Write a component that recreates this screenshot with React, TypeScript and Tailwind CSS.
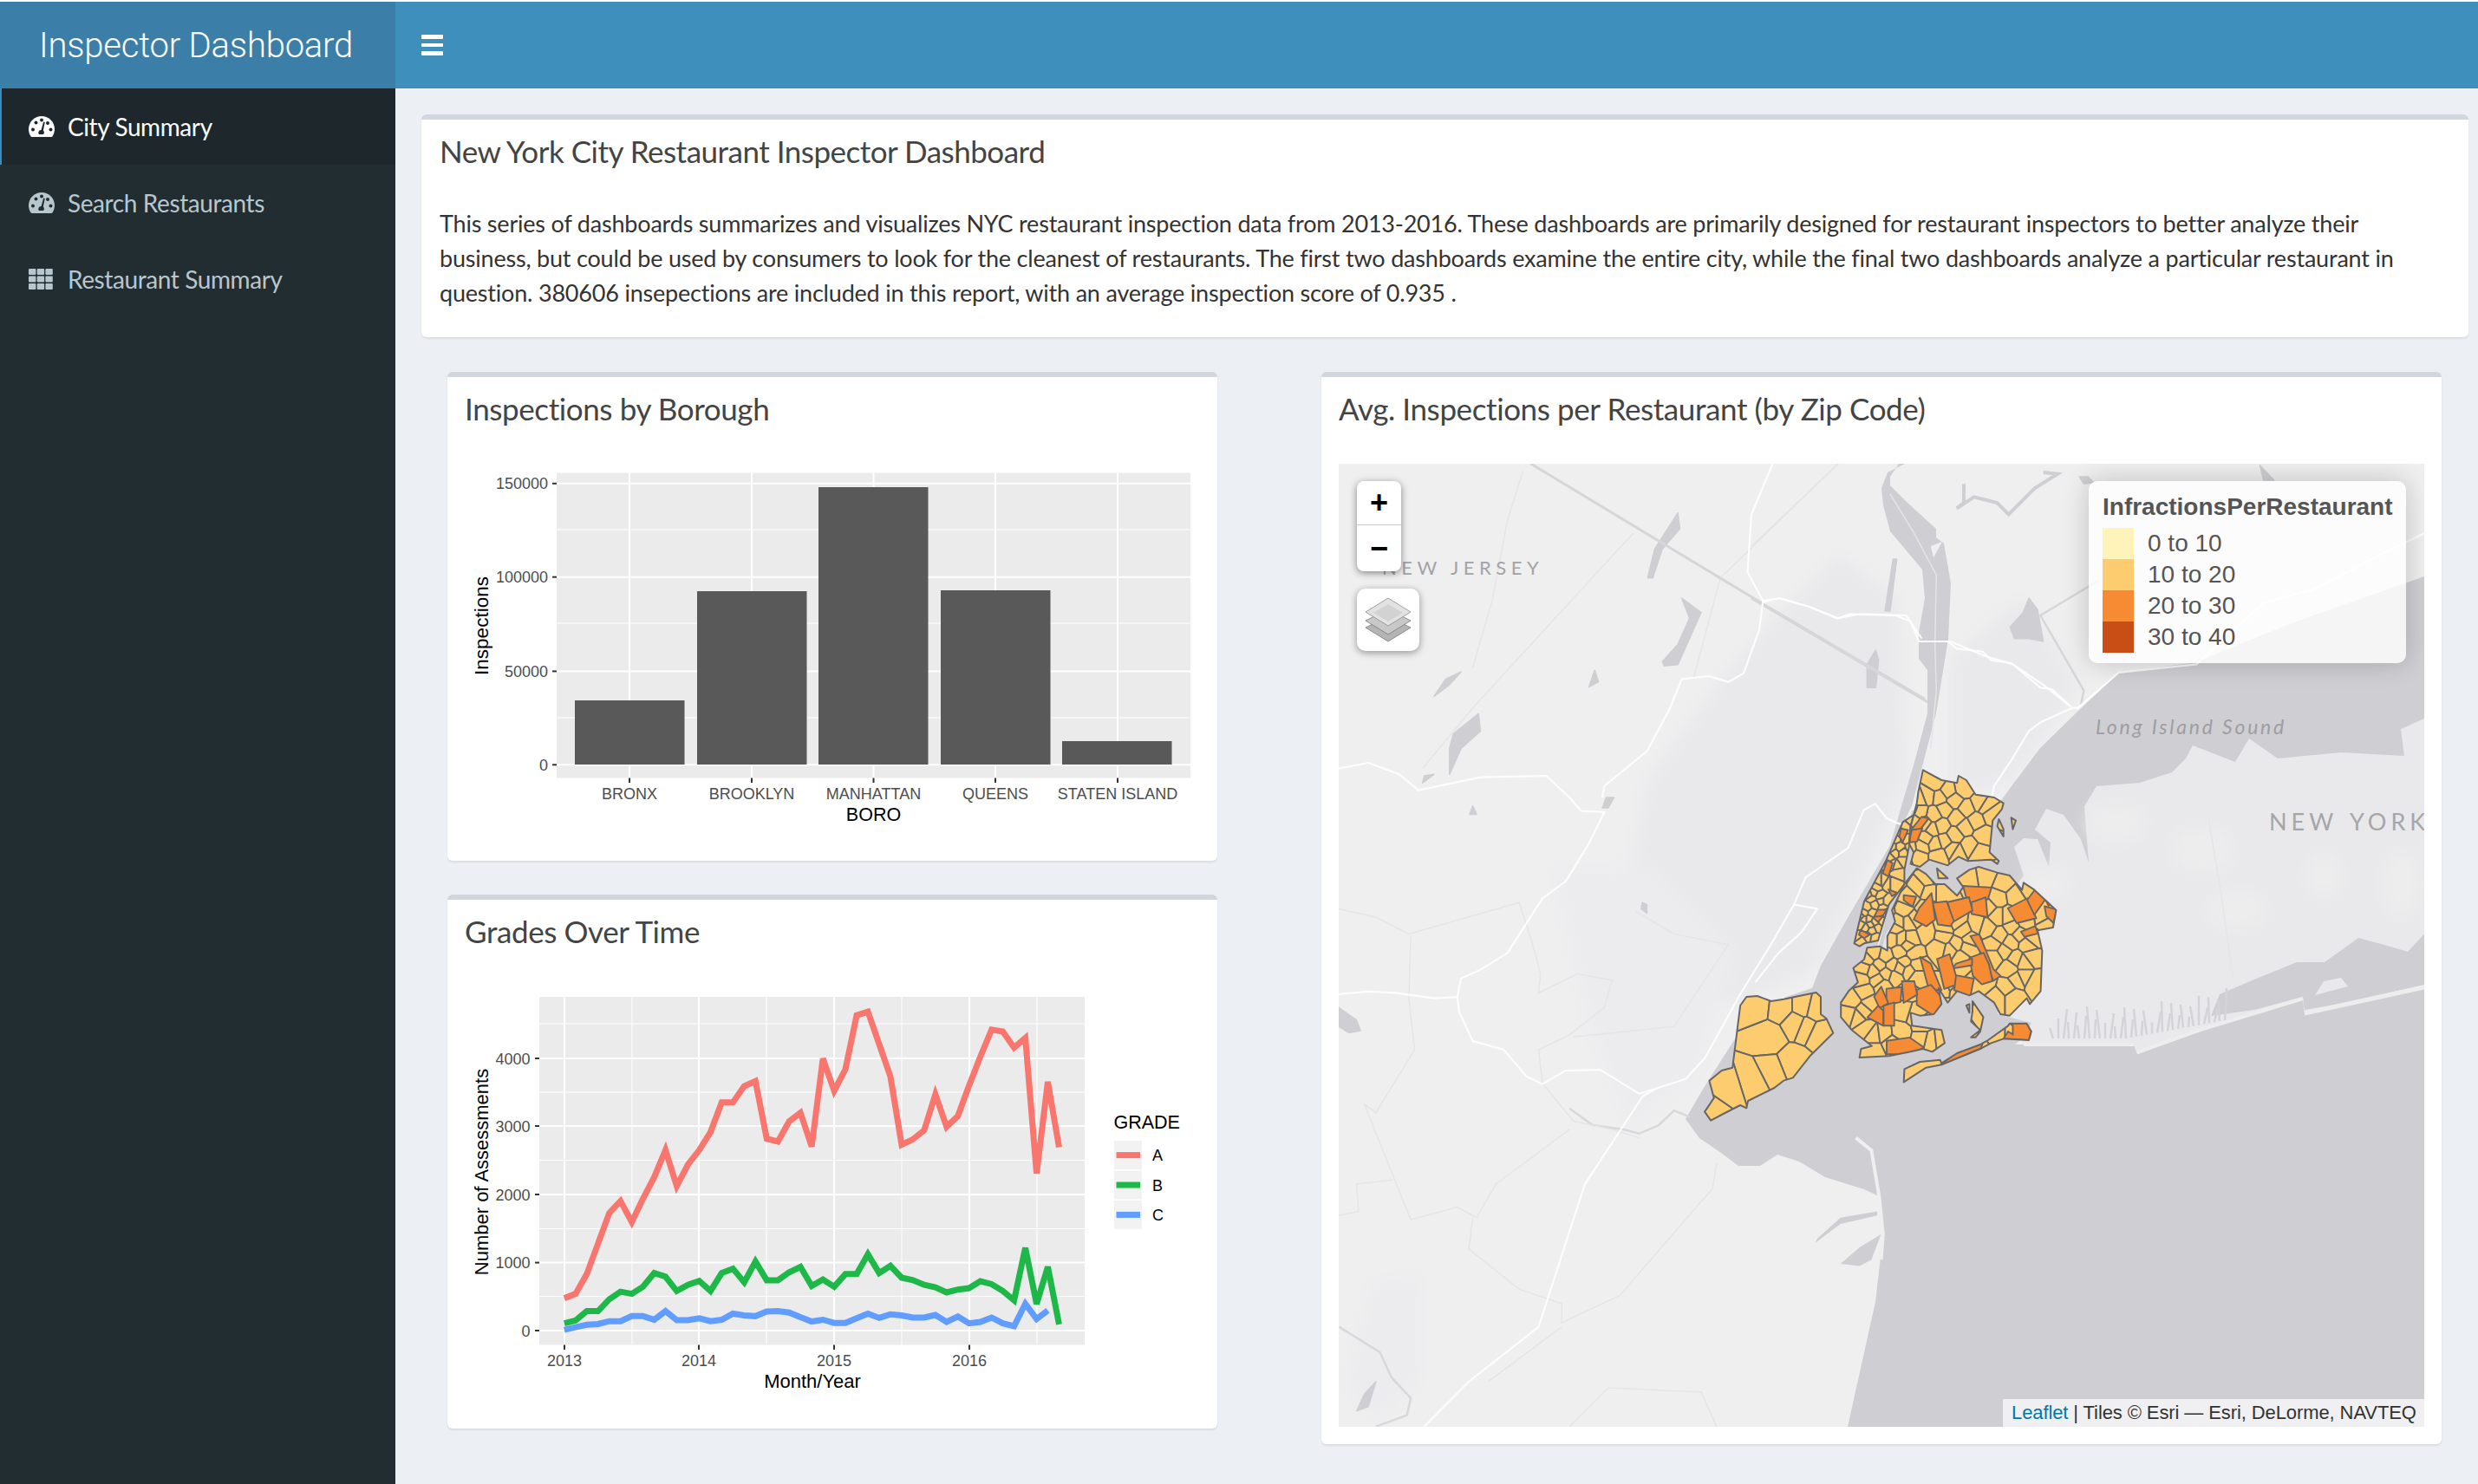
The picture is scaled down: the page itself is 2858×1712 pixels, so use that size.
import React from "react";

type P = number[][];
const pts = (p: P) => p.map((q) => q.join(",")).join(" ");
const z3 = (x: number, y: number) => [500 + x / 1.704, 1020 + y / 2.412];
const z4 = (p: P): P => p.map(([x, y]) => [1900 + x / 2.8, 850 + y / 3]);
const z5 = (p: P): P => p.map(([x, y]) => [1520 + x / 2.24, 420 + y / 3]);
const z7 = (p: P): P => p.map(([x, y]) => [1520 + x / 2.24, 920 + y / 2.063]);
const z10 = (p: P): P => p.map(([x, y]) => [2020 + x / 3, 530 + y / 3]);
const z6 = (p: P): P => p.map(([x, y]) => [2220 + x / 2.458, 420 + y / 2.613]);
const z9 = (p: P): P => p.map(([x, y]) => [2300 + x / 2.976, 900 + y / 3]);

const gradeA = [1152,1140,1085,1000,915,882,940,875,815,740,840,780,740,690,607,607,562,548,708,716,660,636,730,485,575,515,365,355,445,535,725,710,685,585,675,645,560,480,405,410,455,428,805,550,732];
const gradeB = [1222,1214,1188,1188,1155,1134,1140,1120,1082,1092,1132,1115,1104,1132,1082,1070,1108,1050,1102,1102,1080,1065,1118,1100,1120,1085,1085,1030,1082,1062,1095,1102,1115,1122,1136,1128,1124,1105,1113,1132,1158,1012,1168,1065,1225];
const gradeC = [1240,1233,1226,1224,1216,1216,1202,1202,1212,1188,1213,1213,1208,1216,1212,1195,1200,1202,1189,1188,1192,1205,1217,1212,1221,1221,1208,1195,1207,1197,1200,1206,1206,1199,1218,1203,1222,1218,1206,1222,1230,1168,1210,1186];
const series = (v: number[]) => pts(v.map((y, i) => z3(257 + 22.1 * i, y)));

const YEL = "#fdcc6f";
const ORG = "#f68b33";
const DRK = "#c94e16";
const EDGE = "#666666";

const outlines: P[] = [
  [[300,930],[320,900],[355,897],[400,915],[440,908],[500,895],[545,885],[560,900],[560,960],[578,975],[600,1025],[525,1105],[470,1180],[440,1190],[410,1215],[325,1260],[320,1285],[300,1275],[245,1305],[205,1328],[185,1298],[215,1250],[200,1190],[240,1155],[275,1145]],
  [[890,115],[950,150],[1000,160],[1005,135],[1030,150],[1060,200],[1120,210],[1150,230],[1145,250],[1115,290],[1105,400],[1135,430],[1130,440],[1110,425],[1035,430],[1005,415],[970,445],[910,425],[880,450],[850,440],[860,400],[845,370],[850,310],[870,230],[875,190]],
  [[825,295],[860,270],[850,310],[845,380],[830,460],[830,510],[780,580],[760,650],[745,705],[700,715],[685,725],[668,715],[680,660],[700,570],[770,430]],
  [[790,600],[830,510],[870,455],[900,475],[930,510],[960,510],[1000,550],[1020,520],[1000,490],[1040,460],[1070,450],[1130,470],[1170,480],[1210,530],[1215,505],[1250,530],[1320,600],[1310,660],[1260,670],[1275,740],[1270,880],[1235,925],[1225,905],[1170,965],[1140,960],[1120,920],[1070,880],[1040,895],[1000,880],[970,920],[940,870],[950,925],[925,960],[880,965],[850,955],[855,1000],[950,1015],[960,1060],[920,1090],[890,1080],[850,1090],[780,1105],[685,1110],[690,1080],[725,1070],[660,1015],[625,970],[625,920],[650,880],[680,850],[665,800],[700,770],[710,730],[750,725],[775,740],[775,690],[800,640]],
  [[828,1195],[830,1150],[880,1125],[945,1118],[950,1130],[1000,1095],[1075,1065],[1100,1050],[1165,1000],[1170,992],[1225,992],[1240,1020],[1232,1050],[1150,1045],[1110,1060],[1075,1080],[950,1135],[900,1145]],
  [[1050,915],[1085,970],[1075,1020],[1060,1040],[1045,1040],[1075,1015],[1045,985],[1050,950]],
  [[1030,930],[1040,925],[1040,955]],
  [[935,455],[970,490],[940,490]],
  [[1175,280],[1190,290],[1180,320]],
  [[1135,285],[1150,320],[1150,345],[1130,310]],
];

const seeds: P = [
  [390,1040],[350,930],[435,940],[500,940],[515,1000],[555,1020],[470,1130],[400,1160],[345,1190],[255,1220],[210,1290],[480,985],[540,950],
  [930,160],[1020,180],[1090,240],[1030,250],[970,190],[960,250],[1025,310],[1085,340],[990,340],[925,270],[905,205],[855,250],[860,290],[900,350],[985,390],[940,410],[875,410],[850,385],[1070,400],[1110,270],[920,320],[950,310],
  [880,215],[945,210],[990,220],[1000,280],[1060,290],[930,370],[885,380],[960,360],[1040,380],[880,260],[1000,400],[1075,230],[895,300],
  [800,400],[815,385],[790,385],[810,470],[825,430],[760,500],[740,520],[725,560],[710,590],[750,550],[775,510],[795,510],[770,570],[700,630],[725,610],[720,650],[745,660],[735,695],[705,660],[690,650],[690,705],[760,590],[800,350],[835,350],
  [750,500],[730,540],[715,545],[700,610],[735,580],[755,570],[690,620],[715,630],[735,640],[760,640],[770,610],[710,690],[725,670],[680,690],[790,440],[805,445],[780,420],[825,400],[835,320],[810,330],
  [1095,480],[1150,505],[1035,490],[1225,525],[1130,560],[1190,550],[1130,620],[1065,650],[1020,670],[1200,680],[955,690],[830,600],[810,640],[880,520],[960,530],[930,480],[900,500],[1245,700],[1140,690],[1180,660],[1240,760],[1190,770],[1150,740],[1215,830],[1250,850],[1195,840],[1130,900],[1180,900],[1000,720],[1030,730],[900,680],[860,630],[820,700],[800,660],[850,700],[940,730],[980,740],[1280,630],
  [845,640],[845,560],[905,530],[895,600],[1095,660],[1100,590],[1165,620],[1220,640],[1285,640],[1000,640],[1040,700],[960,660],[1120,720],[1170,710],[1230,720],[1170,800],[1215,780],[1160,870],[1090,850],
  [840,720],[815,745],[790,700],[730,750],[700,800],[750,790],[790,790],[830,780],[860,750],[870,790],[745,840],[800,830],[870,830],[700,880],[660,910],[720,925],[680,970],[730,1030],[765,1025],[815,1020],[890,1000],[910,1045],[730,1090],[1010,760],[1120,760],[880,1130],
  [770,760],[710,770],[730,810],[770,820],[815,800],[845,810],[690,840],[760,860],[840,880],[700,950],[650,960],[860,960],[950,1040],[890,1040],[790,1060],[705,1010],
  [830,950],
];

const oranges: P[] = [
  [[885,280],[905,285],[880,320],[855,320]],[[855,325],[885,320],[870,360],[848,362]],[[820,320],[840,325],[825,360],[815,345]],
  [[775,430],[790,440],[778,480],[762,470]],[[1025,520],[1105,525],[1095,560],[1050,575],[1035,560]],[[1050,575],[1090,560],[1095,620],[1050,610]],
  [[975,575],[1035,560],[1045,600],[990,635]],[[925,580],[965,575],[985,635],[975,650],[940,645],[930,600]],[[915,550],[925,630],[900,650],[865,630],[880,595]],
  [[830,550],[865,555],[855,585],[830,565]],[[1170,595],[1225,565],[1250,625],[1195,640]],[[1230,565],[1255,530],[1280,565],[1250,610]],[[1285,590],[1320,600],[1310,640],[1290,620]],
  [[1210,675],[1250,658],[1258,680],[1220,690]],[[1050,700],[1075,695],[1115,800],[1135,820],[1115,835],[1090,770]],[[1045,770],[1085,755],[1100,790],[1110,840],[1080,850],[1055,825]],
  [[1000,785],[1045,770],[1045,790],[990,800]],[[940,775],[975,760],[1000,850],[960,865]],[[885,770],[915,790],[945,870],[910,870]],[[1000,830],[1050,840],[1040,895],[995,875]],
  [[875,880],[915,865],[955,915],[925,960],[875,925]],[[825,850],[860,850],[868,890],[830,915]],[[775,875],[818,870],[815,915],[775,925]],[[755,870],[775,920],[750,935],[735,900]],
  [[745,935],[760,950],[760,995],[715,970]],[[765,935],[795,925],[795,995],[765,995]],[[780,1055],[845,1045],[885,1075],[850,1095],[780,1095]],[[950,1135],[1000,1095],[1075,1065],[1070,1080]],
  [[745,600],[770,600],[755,625],[735,620]],[[690,670],[715,685],[700,695],[685,685]],
  [[780,530],[805,540],[790,550]],[[730,625],[760,620],[745,640]],
];
const rockawayEast: P = [[1170,992],[1225,992],[1240,1020],[1232,1050],[1150,1045],[1165,1020],[1180,1030],[1180,1000]];

function grow(p: P, k: number): P {
  const cx = p.reduce((s, q) => s + q[0], 0) / p.length;
  const cy = p.reduce((s, q) => s + q[1], 0) / p.length;
  return p.map(([x, y]) => [cx + (x - cx) * k, cy + (y - cy) * k]);
}

function clipHalf(poly: P, a: number[], b: number[]): P {
  const mx = (a[0] + b[0]) / 2, my = (a[1] + b[1]) / 2, nx = b[0] - a[0], ny = b[1] - a[1];
  const d = (p: number[]) => (p[0] - mx) * nx + (p[1] - my) * ny;
  const out: P = [];
  poly.forEach((p, i) => {
    const q = poly[(i + 1) % poly.length];
    const dp = d(p), dq = d(q);
    if (dp <= 0) out.push(p);
    if (dp < 0 !== dq < 0) {
      const t = dp / (dp - dq);
      out.push([p[0] + (q[0] - p[0]) * t, p[1] + (q[1] - p[1]) * t]);
    }
  });
  return out;
}
const fullSeeds = z4(seeds);
const cells = fullSeeds.map((s, i) => {
  let poly: P = [[1900, 850], [2400, 850], [2400, 1320], [1900, 1320]];
  fullSeeds.forEach((o, j) => { if (j !== i && poly.length) poly = clipHalf(poly, s, o); });
  return poly;
});

const Sans = "font-['Lato','Noto_Sans',sans-serif]";

function Gauge({ bg, fg }: { bg: string; fg: string }) {
  return (
    <svg width="30" height="24" viewBox="0 0 30 24" className="block shrink-0">
      <path d="M15 0C6.7 0 0 6.7 0 15c0 3.2 1 6.2 2.7 8.6.3.3.6.4 1 .4h22.6c.4 0 .7-.1 1-.4C29 21.200 30 18.200 30 15 30 6.700 23.300 0 15 0z" fill={fg} />
      <circle cx="5" cy="15.500" r="2" fill={bg} />
      <circle cx="8.500" cy="7.500" r="2" fill={bg} />
      <circle cx="15" cy="4.500" r="2" fill={bg} />
      <circle cx="22" cy="8" r="2" fill={bg} />
      <circle cx="25.500" cy="15.500" r="2" fill={bg} />
      <path d="M17.200 6.500L18.800 7 16.800 16.500A3 3 0 0 1 17 21H12A3 3 0 0 1 14.500 16z" fill={bg} />
    </svg>
  );
}

function GridIcon({ fg }: { fg: string }) {
  const cols = [0, 9.700, 19.400];
  return (
    <svg width="28" height="24" viewBox="0 0 28 24" className="block shrink-0">
      {cols.map((x) => [0, 8.500, 17].map((y) => <rect key={`${x}-${y}`} x={x} y={y} width="8.400" height="7" rx="1" fill={fg} />))}
    </svg>
  );
}

function NavItem({ icon, label, active }: { icon: React.ReactNode; label: string; active?: boolean }) {
  return (
    <div className={active ? "flex h-[88px] items-center gap-[15px] border-l-[2px] border-[#3c8dbc] bg-[#1e282c] pl-[31px] text-white" : "flex h-[88px] items-center gap-[15px] pl-[33px] text-[#b8c7ce]"}>
      <div className="flex w-[30px] justify-start">{icon}</div>
      <span className={`${Sans} text-[28px] leading-none tracking-[-0.4px]`}>{label}</span>
    </div>
  );
}

function Card({ title, children, className }: { title: string; children: React.ReactNode; className?: string }) {
  return (
    <div className={`rounded-[6px] border-t-[6px] border-[#d2d6de] bg-white shadow-[0_2px_2px_rgba(0,0,0,0.08)] ${className ?? ""}`}>
      <h3 className={`${Sans} px-[20px] pt-[16px] text-[35px] leading-[40px] tracking-[-0.4px] text-[#444]`}>{title}</h3>
      {children}
    </div>
  );
}

const tickCls = "font-['Liberation_Sans',Arial,sans-serif]";

function BarChart() {
  const bars = [[663, 808], [804, 682], [944, 562], [1085, 681], [1225, 855]];
  const names = ["BRONX", "BROOKLYN", "MANHATTAN", "QUEENS", "STATEN ISLAND"];
  const xs = [726, 867, 1007.5, 1148, 1289];
  const ys: [number, string][] = [[557.8, "150000"], [665.7, "100000"], [774.4, "50000"], [882.3, "0"]];
  return (
    <svg viewBox="516 519 888 474" width="888" height="474" className={`mt-[28px] block ${tickCls}`}>
      <rect x="642" y="545.500" width="731" height="352" fill="#ebebeb" />
      {[611, 719, 828].map((y) => <line key={y} x1="642" x2="1373" y1={y} y2={y} stroke="#fff" strokeWidth="1" />)}
      {ys.map(([y]) => <line key={y} x1="642" x2="1373" y1={y} y2={y} stroke="#fff" strokeWidth="2" />)}
      {xs.map((x) => <line key={x} x1={x} x2={x} y1="545.500" y2="897.500" stroke="#fff" strokeWidth="2" />)}
      {bars.map(([x, y]) => <rect key={x} x={x} y={y} width="126.500" height={882 - y} fill="#595959" />)}
      {ys.map(([y, t]) => (
        <g key={t}>
          <line x1="637" x2="642" y1={y} y2={y} stroke="#333" strokeWidth="2" />
          <text x="632" y={y + 6.500} textAnchor="end" fontSize="18" fill="#4d4d4d">{t}</text>
        </g>
      ))}
      {xs.map((x, i) => (
        <g key={x}>
          <line x1={x} x2={x} y1="897.500" y2="903" stroke="#333" strokeWidth="2" />
          <text x={x} y="921.500" textAnchor="middle" fontSize="18" fill="#4d4d4d">{names[i]}</text>
        </g>
      ))}
      <text x="1007.500" y="946.500" textAnchor="middle" fontSize="21.500" fill="#000">BORO</text>
      <text transform="translate(563 722) rotate(-90)" textAnchor="middle" fontSize="22.500" fill="#000">Inspections</text>
    </svg>
  );
}

function LineChart() {
  const ys: [number, string][] = [[1535, "0"], [1456.6, "1000"], [1378, "2000"], [1299, "3000"], [1221, "4000"]];
  const xs: [number, string][] = [[651, "2013"], [806, "2014"], [962, "2015"], [1118, "2016"]];
  const keys: [number, string, string][] = [[1332.6, "#f8766d", "A"], [1367, "#1db847", "B"], [1401.4, "#619cff", "C"]];
  return (
    <svg viewBox="516 1122 888 526" width="888" height="526" className={`mt-[28px] block ${tickCls}`}>
      <rect x="622" y="1150" width="629" height="401.500" fill="#ebebeb" />
      {[1495.6, 1417.5, 1338.5, 1260, 1181].map((y) => <line key={y} x1="622" x2="1251" y1={y} y2={y} stroke="#fff" strokeWidth="1" />)}
      {[729, 884, 1040, 1196].map((x) => <line key={x} x1={x} x2={x} y1="1150" y2="1551.500" stroke="#fff" strokeWidth="1" />)}
      {ys.map(([y]) => <line key={y} x1="622" x2="1251" y1={y} y2={y} stroke="#fff" strokeWidth="2" />)}
      {xs.map(([x]) => <line key={x} x1={x} x2={x} y1="1150" y2="1551.500" stroke="#fff" strokeWidth="2" />)}
      <polyline points={series(gradeA)} fill="none" stroke="#f8766d" strokeWidth="7" strokeLinejoin="miter" />
      <polyline points={series(gradeB)} fill="none" stroke="#1db847" strokeWidth="7" />
      <polyline points={series(gradeC)} fill="none" stroke="#619cff" strokeWidth="7" />
      {ys.map(([y, t]) => (
        <g key={t}>
          <line x1="617" x2="622" y1={y} y2={y} stroke="#333" strokeWidth="2" />
          <text x="611.500" y={y + 6.500} textAnchor="end" fontSize="18" fill="#4d4d4d">{t}</text>
        </g>
      ))}
      {xs.map(([x, t]) => (
        <g key={t}>
          <line x1={x} x2={x} y1="1551.500" y2="1557" stroke="#333" strokeWidth="2" />
          <text x={x} y="1575.500" textAnchor="middle" fontSize="18" fill="#4d4d4d">{t}</text>
        </g>
      ))}
      <text x="937" y="1601" textAnchor="middle" fontSize="22" fill="#000">Month/Year</text>
      <text transform="translate(563 1352) rotate(-90)" textAnchor="middle" fontSize="22" fill="#000">Number of Assessments</text>
      <text x="1284.500" y="1301.500" fontSize="21.500" fill="#000">GRADE</text>
      {keys.map(([y, c, t]) => (
        <g key={t}>
          <rect x="1285" y={y - 16.500} width="32" height="33" fill="#f2f2f2" />
          <line x1="1287.500" x2="1315" y1={y} y2={y} stroke={c} strokeWidth="7" />
          <text x="1329" y={y + 6.500} fontSize="18" fill="#000">{t}</text>
        </g>
      ))}
    </svg>
  );
}

const WATER = "#cfcfd3";
const lakes: P[] = [
  ...[
    [[930,515],[935,570],[890,640],[865,740],[852,740],[870,640]],
    [[940,810],[990,860],[960,950],[930,1040],[895,1045],[890,1030],[930,970],[960,880]],
    [[370,1065],[340,1110],[300,1150],[330,1090]],
    [[415,1210],[420,1270],[370,1330],[340,1420],[340,1330],[350,1280]],
    [[715,1060],[725,1100],[700,1118]],
    [[300,1420],[270,1450],[275,1425]],
  ].map(z5),
  ...[
    [[54,500],[100,530],[110,555],[80,560],[54,545]],
    [[838,250],[850,255],[850,275],[835,265]],
    [[400,20],[410,40],[392,40]],
    [[745,0],[765,0],[750,25],[735,25]],
    [[150,1390],[130,1450],[100,1460],[120,1420]],
  ].map(z7),
  ...[
    [[960,480],[990,520],[1010,630],[960,620],[910,620],[895,580],[940,530]],
    [[490,345],[503,345],[480,525],[462,525]],
    [[430,660],[440,695],[430,790],[400,790],[400,710]],
    [[1135,60],[1165,60],[1185,80],[1150,85]],
  ].map(z10),
  ...[[[950,305],[990,350],[960,350]]].map(z6),
];

const faintLines: P[] = [
  z5([[815,585],[400,1190],[270,1400]]),
  z5([[1340,350],[1040,740],[970,1090]]),
  z5([[530,370],[490,540],[450,820],[400,1050]]),
  z7([[54,265],[150,285],[235,325],[520,250],[555,350],[575,420],[570,465],[670,420],[760,435],[740,500],[650,565],[570,600],[580,680],[660,770],[760,790],[830,810]]),
  z7([[120,730],[150,750],[250,600],[235,480],[240,330]]),
  z7([[120,730],[240,1005],[360,975],[410,1000],[460,920],[650,790]]),
  z7([[54,995],[105,985],[100,920],[195,910]]),
  z7([[400,1000],[390,1075],[520,1170],[630,1205],[630,1250],[780,1185],[1020,930],[1030,870]]),
  z7([[660,570],[920,545],[1060,350],[920,325],[820,270]]),
  z7([[440,1390],[630,1260]]),
  z7([[650,1497],[750,1405],[990,1415],[1030,1497]]),
  z10([[300,15],[0,300]]),
  z9([[735,130],[780,400],[820,690]]),
];

const roads: P[] = [
  z7([[54,468],[130,462],[200,465],[300,478],[360,475],[365,510],[400,580],[480,600],[540,665],[580,682],[640,650],[730,648],[830,705],[900,685],[950,670],[1000,620],[1090,470],[1170,350],[1230,255],[1260,190],[1370,120],[1410,30],[1440,15],[1470,50],[1500,62],[1560,72]]),
  z7([[360,475],[370,430],[420,410],[490,370],[580,240],[640,200],[700,110],[740,35],[680,32],[650,0]]),
  z7([[275,1497],[390,1390],[570,1260],[690,920],[840,710],[880,690]]),
  z5([[1175,345],[1120,520],[1110,720],[1150,820],[1140,920],[1100,1070],[1060,1100],[1010,1080],[940,1090],[910,1190],[850,1340],[740,1460],[735,1500]]),
  z5([[54,1400],[130,1380],[210,1420],[260,1475],[420,1430],[590,1425],[650,1500]]),
  z5([[1150,825],[1190,810],[1270,840],[1340,880],[1400,865],[1520,870],[1560,950]]),
  z10([[40,490],[100,480],[200,510],[300,550],[340,535],[500,540],[550,560],[580,630],[680,630],[710,655],[800,665],[830,695],[900,705],[1000,790],[1040,795],[1110,860],[1130,860],[1200,800]]),
  z10([[1110,860],[1000,910],[960,940],[900,1040],[840,1130],[830,1180]]),
  z6([[70,835],[170,880],[250,905],[340,970],[410,1030]]),
  z6([[430,1040],[550,930],[770,905],[960,720],[1100,680],[1300,570],[1416,510]]),
  z7([[1230,255],[1290,265],[1250,320],[1190,370],[1130,440]]),
];

const fingers = Array.from({ length: 34 }, (_, i) => {
  const x = 2368 + i * 6;
  const h = 12 + ((i * 37) % 26);
  const lean = ((i * 13) % 9) - 4;
  const base = 1198 - Math.max(0, i - 14) * 1.1;
  return { x, h, lean, base };
});

function MapView() {
  const W1: P = [[2197,535],[2190,535],[2180,550],[2180,560],[2200,580],[2233,610],[2233,620],[2242,627],[2250,673],[2247,737],[2233,823],[2205,930],[2195,950],[2170,1070],[2160,1120],[2190,1200],[2334,1205],[2461,1205],[2465,1216],[2535,1190],[2656,1153],[2658,1170],[2796,1140],[2796,1646],[2131,1646],[2163,1502],[2172,1424],[2167,1380],[2150,1372],[2105,1358],[2075,1340],[2050,1332],[2030,1345],[2005,1345],[1985,1330],[1960,1313],[1944,1291],[1965,1255],[2000,1200],[2060,1150],[2090,1140],[2100,1114],[2132,1057],[2180,975],[2193,930],[2207,883],[2223,823],[2223,773],[2213,760],[2213,730],[2220,690],[2217,657],[2180,613],[2172,583],[2170,563],[2177,545]];
  const W2: P = [[2796,665],[2640,720],[2533,764],[2444,776],[2397,820],[2353,863],[2320,907],[2303,930],[2205,935],[2160,1120],[2160,1220],[2200,1300],[2330,1200],[2796,1200]];
  const LI: P = [[2796,829],[2769,841],[2773,872],[2700,868],[2627,875],[2594,852],[2578,879],[2529,860],[2521,875],[2505,891],[2468,903],[2418,907],[2404,930],[2409,995],[2400,968],[2380,940],[2360,933],[2347,957],[2365,972],[2363,1000],[2350,968],[2334,967],[2323,977],[2334,1010],[2320,1030],[2310,1100],[2304,1170],[2343,1180],[2332,1203],[2461,1205],[2465,1216],[2535,1190],[2656,1153],[2658,1170],[2796,1140]];
  return (
    <svg viewBox="1544 535 1252 1111" width="1252" height="1111" className="block">
      <defs>
        <filter id="soft" x="-20%" y="-20%" width="140%" height="140%"><feGaussianBlur stdDeviation="9" /></filter>
        <clipPath id="nyc">{outlines.map((o, i) => <polygon key={i} points={pts(z4(o))} />)}</clipPath>
      </defs>
      <rect x="1544" y="535" width="1252" height="1111" fill="#efeff0" />
      <g filter="url(#soft)" fill="#e9e9eb">
        <polygon points="1980,790 2040,720 2120,640 2190,690 2200,900 2130,1050 2090,1120 2000,1160 1930,1120 1880,1000 1900,900" />
        <polygon points="2250,760 2330,690 2400,790 2320,900 2250,920" />
        <polygon points="1790,1000 1900,1000 2000,1100 1960,1240 1880,1300 1830,1180" fill="#ececee" />
        <polygon points="1580,1480 1640,1470 1640,1590 1590,1640 1550,1600" fill="#ececee" />
      </g>
      <polygon points={pts(W2)} fill={WATER} />
      <polygon points={pts(W1)} fill={WATER} />
      <polygon points={pts(LI)} fill="#e9e9eb" />
      <g fill="#edEDEE" filter="url(#soft)">
        <ellipse cx="2440" cy="950" rx="34" ry="22" />
        <ellipse cx="2360" cy="1020" rx="26" ry="18" />
        <ellipse cx="2540" cy="980" rx="34" ry="26" />
        <ellipse cx="2580" cy="1050" rx="34" ry="22" />
        <ellipse cx="2680" cy="1010" rx="20" ry="26" />
        <ellipse cx="2770" cy="1020" rx="22" ry="38" />
      </g>
      <polygon points="2550,1172 2560,1147 2600,1130 2649,1110 2681,1110 2720,1082 2750,1090 2777,1098 2800,1073 2800,1135 2700,1158 2658,1165 2656,1150 2600,1165" fill={WATER} />
      {fingers.map((f) => <line key={f.x} x1={f.x} y1={f.base} x2={f.x + f.lean} y2={f.base - f.h} stroke="#d4d4d8" strokeWidth="2.500" />)}
      <polygon points="2680,1132 2700,1128 2708,1138 2670,1148" fill="#e9e9eb" />
      <polyline points="2334,1205 2461,1205" stroke="#ededee" strokeWidth="4" fill="none" />
      <polyline points="2465,1214 2535,1189 2656,1152" stroke="#ededee" strokeWidth="4" fill="none" />
      <polyline points="2658,1169 2800,1138" stroke="#ededee" strokeWidth="5" fill="none" />
      <polyline points={pts(z7([[1390,810],[1430,840],[1450,950],[1460,1040],[1455,1100]]))} stroke="#efeff0" strokeWidth="4" fill="none" />
      <polygon points={pts(z7([[1290,1050],[1350,1000],[1445,985],[1445,995],[1350,1015],[1285,1060]]))} fill="#cfcfd3" />
      <polygon points={pts(z7([[1350,1110],[1400,1070],[1455,1040],[1430,1100],[1400,1115]]))} fill="#cfcfd3" />
      <polygon points={pts(z10([[620,300],[660,285],[630,340]]))} fill="#efeff0" />
      <polyline points={pts(z10([[480,120],[560,250],[640,400],[635,640],[640,800],[620,1000]]))} stroke="#e4e4e6" strokeWidth="1.500" fill="none" />
      {lakes.map((l, i) => <polygon key={i} points={pts(l)} fill={WATER} stroke={WATER} strokeWidth="1.500" strokeLinejoin="round" />)}
      <polyline points={pts(z10([[735,85],[735,150],[710,170],[770,130],[850,150],[890,190],[980,100],[1060,50],[1010,45]]))} stroke={WATER} strokeWidth="4" fill="none" />
      <polyline points={pts(z7([[55,1260],[160,1320],[190,1380],[240,1430],[230,1470],[150,1497]]))} stroke="#d8d8db" strokeWidth="2.500" fill="none" />
      <polyline points={pts(z7([[650,740],[710,780],[790,790],[830,800],[880,780],[920,745],[960,760]]))} stroke="#d8d8db" strokeWidth="2.500" fill="none" />
      {faintLines.map((l, i) => <polyline key={i} points={pts(l)} stroke="#e5e5e7" strokeWidth="1.500" fill="none" />)}
      <polyline points={pts(z5([[550,345],[1150,830],[1568,1160]]))} stroke="#d6d6d9" strokeWidth="3" fill="none" />
      <polyline points={pts(z10([[0,480],[610,840]]))} stroke="#d6d6d9" strokeWidth="3" fill="none" />
      <polyline points={pts(z10([[1200,420],[1000,540],[1150,800],[1140,850]]))} stroke="#d6d6d9" strokeWidth="2.500" fill="none" />
      {roads.map((l, i) => <polyline key={i} points={pts(l)} stroke="#ffffff" strokeOpacity="0.85" strokeWidth="2.200" strokeLinejoin="round" fill="none" />)}
      <polygon points={pts(z4([[770,680],[800,640],[775,740],[755,745]]))} fill="#e4e4e6" />
      <polygon points={pts(z4([[800,465],[778,535],[762,540],[785,470]]))} fill="#e7e7e9" />
      <text x="1594" y="663" fontSize="22" letterSpacing="5.500" fill="#a3a3a6" className="font-['Lato',sans-serif]">NEW JERSEY</text>
      <text y="958" fontSize="27" letterSpacing="5" fill="#a6a6a9" className="font-['Lato',sans-serif]">
        <tspan x="2617">NEW</tspan> <tspan x="2710">YORK</tspan>
      </text>
      <text x="2417" y="847" fontSize="23" letterSpacing="2.800" fontStyle="italic" fill="#9d9da2" className="font-['Lato',sans-serif]">Long Island Sound</text>
      <g clipPath="url(#nyc)">
        {cells.map((c, i) => c.length > 2 && <polygon key={i} points={pts(c)} fill={YEL} stroke={EDGE} strokeWidth="1.900" strokeLinejoin="round" />)}
        {oranges.map((o, i) => <polygon key={i} points={pts(z4(grow(o, 1.15)))} fill={ORG} stroke={EDGE} strokeWidth="1.900" strokeLinejoin="round" />)}
        <polygon points={pts(z4(rockawayEast))} fill={ORG} stroke={EDGE} strokeWidth="1.900" />
        <polygon points={pts(z4([[1285,570],[1305,578],[1295,590]]))} fill={DRK} />
      </g>
      {outlines.map((o, i) => <polygon key={i} points={pts(z4(o))} fill="none" stroke={EDGE} strokeWidth="2" strokeLinejoin="round" />)}
    </svg>
  );
}

export default function App() {
  const legend: [string, string][] = [["#fef3b9", "0 to 10"], [YEL, "10 to 20"], [ORG, "20 to 30"], [DRK, "30 to 40"]];
  return (
    <div className="flex h-[1712px] w-[2858px] flex-col overflow-hidden bg-white pt-[2px]">
      <header className="flex h-[100px] shrink-0 bg-[#3f8fbd]">
        <div className="flex w-[456px] shrink-0 items-center bg-[#3b7fa9] pl-[45px] pt-[2px]">
          <span className="font-['Roboto',sans-serif] text-[40px] font-light leading-none tracking-[-0.2px] text-white">Inspector Dashboard</span>
        </div>
        <div className="flex flex-col justify-center gap-[5px] pl-[30px]">
          <div className="h-[4.500px] w-[25px] rounded-[1px] bg-white" />
          <div className="h-[4.500px] w-[25px] rounded-[1px] bg-white" />
          <div className="h-[4.500px] w-[25px] rounded-[1px] bg-white" />
        </div>
      </header>
      <div className="flex min-h-0 flex-1">
        <aside className="w-[456px] shrink-0 bg-[#222d32]">
          <NavItem active label="City Summary" icon={<Gauge bg="#1e282c" fg="#ffffff" />} />
          <NavItem label="Search Restaurants" icon={<Gauge bg="#222d32" fg="#b8c7ce" />} />
          <NavItem label="Restaurant Summary" icon={<GridIcon fg="#b8c7ce" />} />
        </aside>
        <main className="flex-1 bg-[#ecf0f5] pl-[30px] pr-[11px] pt-[30px]">
          <div className="h-[257px] rounded-[6px] border-t-[6px] border-[#d2d6de] bg-white px-[21px] shadow-[0_2px_2px_rgba(0,0,0,0.08)]">
            <h2 className={`${Sans} pt-[16px] text-[35px] leading-[40px] tracking-[-0.5px] text-[#444]`}>New York City Restaurant Inspector Dashboard</h2>
            <p className={`${Sans} mt-[44px] whitespace-nowrap text-[27px] leading-[40px] tracking-[-0.2px] text-[#333]`}>
              This series of dashboards summarizes and visualizes NYC restaurant inspection data from 2013-2016. These dashboards are primarily designed for restaurant inspectors to better analyze their<br />
              business, but could be used by consumers to look for the cleanest of restaurants. The first two dashboards examine the entire city, while the final two dashboards analyze a particular restaurant in<br />
              question. 380606 insepections are included in this report, with an average inspection score of 0.935 .
            </p>
          </div>
          <div className="mt-[40px] flex items-start pl-[30px]">
            <div className="flex w-[888px] shrink-0 flex-col gap-[39px]">
              <Card title="Inspections by Borough"><BarChart /></Card>
              <Card title="Grades Over Time"><LineChart /></Card>
            </div>
            <Card title="Avg. Inspections per Restaurant (by Zip Code)" className="ml-[120px] w-[1292px] shrink-0">
              <div className="relative mx-[20px] mb-[20px] mt-[44px] h-[1111px] overflow-hidden">
                <MapView />
                <div className="absolute left-[21px] top-[20px] w-[51px] overflow-hidden rounded-[8px] bg-white shadow-[0_2px_8px_rgba(0,0,0,0.45)]">
                  <div className="flex h-[51px] items-center justify-center border-b border-[#ccc] font-['Liberation_Sans',sans-serif] text-[36px] font-bold leading-none text-black">+</div>
                  <div className="flex h-[53px] items-center justify-center font-['Liberation_Sans',sans-serif] text-[36px] font-bold leading-none text-black">−</div>
                </div>
                <div className="absolute left-[21px] top-[144px] flex h-[72px] w-[72px] items-center justify-center rounded-[10px] bg-white shadow-[0_2px_8px_rgba(0,0,0,0.4)]">
                  <svg width="54" height="52" viewBox="0 0 54 52">
                    <path d="M27 22L53 35 27 51 1 35z" fill="#b5b5b5" stroke="#777" strokeWidth="0.800" />
                    <path d="M27 14L53 27 27 43 1 27z" fill="#c8c8c8" stroke="#777" strokeWidth="0.800" />
                    <path d="M27 1L53 17 27 33 1 17z" fill="#e2e2e2" stroke="#8a8a8a" strokeWidth="0.800" />
                    <path d="M27 8L44 18 27 28 10 18z" fill="#d2d2d2" />
                  </svg>
                </div>
                <div className="absolute right-[21px] top-[20px] h-[210px] w-[366px] rounded-[10px] bg-white/80 pl-[16px] pt-[16px] font-['Liberation_Sans',sans-serif] text-[#555] shadow-[0_0_30px_rgba(0,0,0,0.2)]">
                  <div className="text-[28px] font-bold leading-[28px] text-[#555]">InfractionsPerRestaurant</div>
                  <div className="mt-[10px]">
                    {legend.map(([c, t]) => (
                      <div key={t} className="flex h-[36px] items-center">
                        <div className="h-[36px] w-[36px]" style={{ backgroundColor: c }} />
                        <span className="ml-[16px] text-[28px] leading-none">{t}</span>
                      </div>
                    ))}
                  </div>
                </div>
                <div className="absolute bottom-0 right-0 flex h-[32px] w-[486px] items-center whitespace-nowrap bg-[#f0f0f2] pl-[10px] font-['Liberation_Sans',sans-serif] text-[22px] leading-none tracking-[-0.1px] text-[#333]">
                  <span className="text-[#0078a8]">Leaflet</span>
                  <span className="whitespace-pre"> | Tiles © Esri — Esri, DeLorme, NAVTEQ</span>
                </div>
              </div>
            </Card>
          </div>
        </main>
      </div>
    </div>
  );
}
